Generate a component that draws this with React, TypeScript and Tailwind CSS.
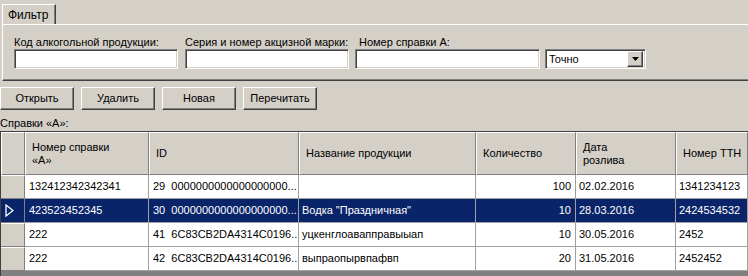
import React from "react";

// форма "Справки А": фильтр, кнопки, таблица

const Sunken: React.FC<{ className?: string; children?: React.ReactNode }> = ({ className = "", children }) => (
  <div
    className={
      "h-[20px] bg-white border border-t-[#808080] border-l-[#808080] border-b-white border-r-white shadow-[inset_1px_1px_0_#404040,inset_-1px_-1px_0_#d4d0c8] " +
      className
    }
  >
    {children}
  </div>
);

const Button: React.FC<{ label: string }> = ({ label }) => (
  <button className="w-[74px] h-[23px] flex items-center justify-center bg-[#d4d0c8] border border-t-white border-l-white border-b-[#404040] border-r-[#404040] shadow-[inset_-1px_-1px_0_#808080] text-[11px] text-black">
    {label}
  </button>
);

type Row = { num: string; id: string; name: string; qty: string; date: string; ttn: string };

const rows: Row[] = [
  { num: "132412342342341", id: "29  0000000000000000000...", name: "", qty: "100", date: "02.02.2016", ttn: "1341234123" },
  { num: "423523452345", id: "30  0000000000000000000...", name: 'Водка "Праздничная"', qty: "10", date: "28.03.2016", ttn: "2424534532" },
  { num: "222", id: "41  6C83CB2DA4314C0196...", name: "уцкенглоавапправыыап", qty: "10", date: "30.05.2016", ttn: "2452" },
  { num: "222", id: "42  6C83CB2DA4314C0196...", name: "выпраопырвпафвп", qty: "20", date: "31.05.2016", ttn: "2452452" },
];

const cols = "grid grid-cols-[24px_124px_150px_177px_100px_100px_1fr]";

const HeadCell: React.FC<{ children?: React.ReactNode }> = ({ children }) => (
  <div className="h-[43px] flex items-center pl-[6px] leading-[13px] border-t border-l border-t-white border-l-white border-r border-b border-r-[#808080] border-b-[#808080]">
    {children}
  </div>
);

export default function App() {
  return (
    <div
      className="w-[748px] h-[276px] overflow-hidden bg-[#d4d0c8] text-[11px] text-black"
      style={{ fontFamily: '"Liberation Sans", Arial, sans-serif' }}
    >
      {/* вкладка */}
      <div className="pt-[4px] pl-[2px] flex">
        <div className="h-[20px] w-[54px] flex items-center pl-[5px] text-[12px] border-t border-l border-t-white border-l-white border-r border-r-[#404040] shadow-[inset_-1px_0_0_#808080]">
          Фильтр
        </div>
      </div>

      {/* панель фильтра */}
      <div className="ml-[2px] h-[57px] border-t border-l border-t-white border-l-white border-b border-b-[#404040] shadow-[inset_0_-1px_0_#808080] pl-[11px] pt-[11px] flex gap-[6px]">
        <div className="flex flex-col w-[164px]">
          <div className="h-[13px] leading-[13px]">Код алкогольной продукции:</div>
          <Sunken />
        </div>
        <div className="flex flex-col w-[164px] ml-[1px]">
          <div className="h-[13px] leading-[13px]">Серия и номер акцизной марки:</div>
          <Sunken />
        </div>
        <div className="flex flex-col w-[185px]">
          <div className="h-[13px] leading-[13px] pl-[4px]">Номер справки А:</div>
          <Sunken />
        </div>
        <div className="flex flex-col w-[101px] ml-[-1px]">
          <div className="h-[13px]" />
          <Sunken className="flex items-center pl-[3px] pr-[2px]">
            <span className="flex-1">Точно</span>
            <span className="w-[16px] h-[16px] flex items-center justify-center bg-[#d4d0c8] border border-t-white border-l-white border-b-[#404040] border-r-[#404040] shadow-[inset_-1px_-1px_0_#808080]">
              <svg width="7" height="4" viewBox="0 0 7 4">
                <polygon points="0,0 7,0 3.5,4" fill="#000" />
              </svg>
            </span>
          </Sunken>
        </div>
      </div>

      {/* кнопки */}
      <div className="mt-[6px] flex gap-[7px]">
        <Button label="Открыть" />
        <Button label="Удалить" />
        <Button label="Новая" />
        <Button label="Перечитать" />
      </div>

      <div className="h-[13px] leading-[13px] mt-[7px]">Справки «А»:</div>

      {/* таблица */}
      <div className="mt-[1px] h-[150px] border-t border-l border-[#404040] bg-[#808080]">
        <div className={cols + " bg-[#d4d0c8]"}>
          <HeadCell />
          <HeadCell>
            <span>
              Номер справки
              <br />
              «А»
            </span>
          </HeadCell>
          <HeadCell>ID</HeadCell>
          <HeadCell>Название продукции</HeadCell>
          <HeadCell>Количество</HeadCell>
          <HeadCell>
            <span>
              Дата
              <br />
              розлива
            </span>
          </HeadCell>
          <HeadCell>Номер ТТН</HeadCell>
        </div>

        {rows.map((r, i) => {
          const sel = i === 1;
          const cell =
            "h-[24px] flex items-center whitespace-pre overflow-hidden border-r border-b border-[#a0a0a0] " +
            (sel ? "bg-[#0a246a] text-white" : "bg-white");
          return (
            <div key={i} className={cols}>
              {sel ? (
                <div className="h-[24px] flex items-center pl-[4px] bg-[#0a246a] border-r border-b border-[#808080]">
                  <svg width="9" height="13" viewBox="0 0 9 13">
                    <polygon points="1,1 8,6.5 1,12" fill="none" stroke="#fff" strokeWidth="1.3" />
                  </svg>
                </div>
              ) : (
                <div className="h-[24px] bg-[#d4d0c8] border-t border-t-white border-r border-b border-r-[#808080] border-b-[#808080]" />
              )}
              <div className={cell + " pl-[4px]"}>{r.num}</div>
              <div className={cell + " pl-[4px]"}>{r.id}</div>
              <div className={cell + " pl-[3px]"}>{r.name}</div>
              <div className={cell + " justify-end pr-[4px]"}>{r.qty}</div>
              <div className={cell + " pl-[3px]"}>{r.date}</div>
              <div className={cell + " pl-[3px]"}>{r.ttn}</div>
            </div>
          );
        })}
      </div>
    </div>
  );
}
